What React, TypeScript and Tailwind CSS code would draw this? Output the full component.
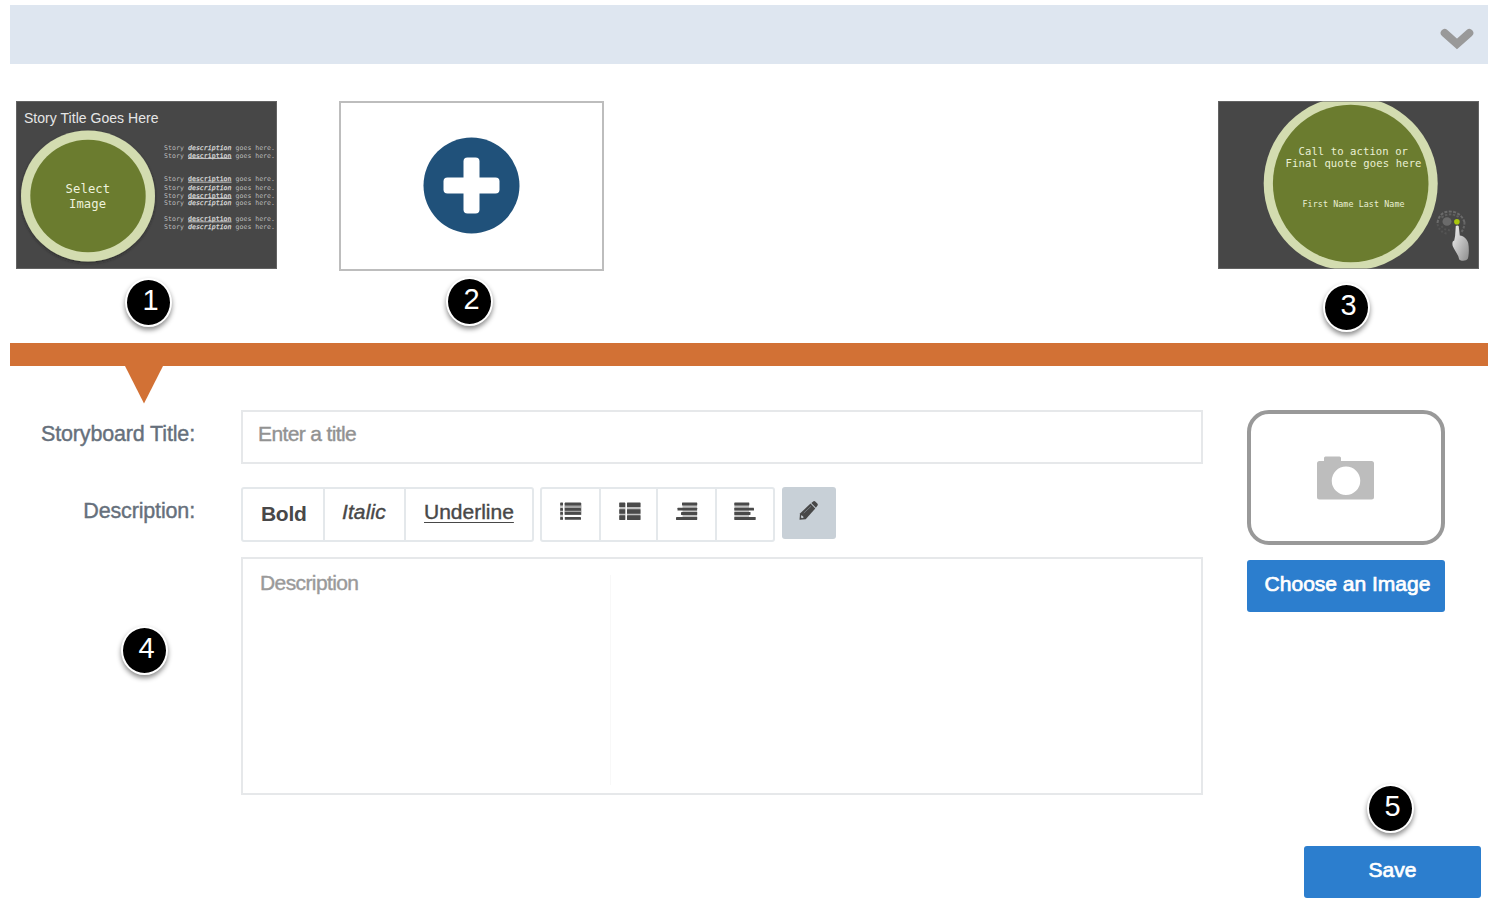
import React from "react";

const FONT = "font-['Liberation_Sans',Arial,sans-serif]";
const MONO = "'DejaVu Sans Mono', monospace";

function Badge({ n, className }: { n: number; className: string }) {
  return (
    <div
      className={`absolute flex h-[49px] w-[47px] items-center justify-center rounded-[50%] border-2 border-white bg-black pb-[4px] pl-[4px] text-[29px] leading-none text-white shadow-[0_3px_5px_rgba(0,0,0,0.45)] ${className}`}
    >
      {n}
    </div>
  );
}

const LINES: [number, boolean][] = [
  [150, true],
  [157.7, false],
  [181.3, false],
  [189.6, true],
  [197.6, false],
  [205, true],
  [221, false],
  [229, true],
];

function StoryThumb() {
  return (
    <svg className="block h-[168px] w-[261px]" viewBox="16 101 261 168">
      <defs>
        <filter id="soft" x="-10%" y="-10%" width="120%" height="125%">
          <feDropShadow dx="0" dy="1.5" stdDeviation="1.5" floodColor="#222" floodOpacity="0.6" />
        </filter>
      </defs>
      <rect x="16" y="101" width="261" height="168" fill="#474747" />
      <text x="24" y="122.8" fontSize="14" fill="#e6e6e6" textLength="134.5">Story Title Goes Here</text>
      <ellipse cx="88" cy="196" rx="67" ry="65.5" fill="#d3dcb0" filter="url(#soft)" />
      <ellipse cx="88" cy="196" rx="57.7" ry="56.3" fill="#6b7c2f" />
      <g fontFamily={MONO} fill="#eef2dc" fontSize="12.2">
        <text x="65.6" y="192.7" textLength="44.5">Select</text>
        <text x="69" y="207.700" textLength="37">Image</text>
      </g>
      {LINES.map(([y, italic]) => (
        <g key={y} fontFamily={MONO} fontSize="6.5" fill="#bcbcbc">
          <text x="164" y={y} textLength="20">Story</text>
          <text x="188" y={y} textLength="43.5" fill="#dcdcdc" fontStyle={italic ? "italic" : "normal"} stroke="#dcdcdc" strokeWidth="0.25">
            description
          </text>
          {!italic && <rect x="188" y={y + 0.4} width="43.5" height="0.9" fill="#cccccc" />}
          <text x="235.6" y={y} textLength="15.8">goes</text>
          <text x="255.3" y={y} textLength="19.5">here.</text>
        </g>
      ))}
      <rect x="16.5" y="101.5" width="260" height="167" fill="none" stroke="#777" strokeOpacity="0.6" />
    </svg>
  );
}

function ClosingThumb() {
  return (
    <svg className="block h-[168px] w-[261px]" viewBox="1217.5 101 261 168">
      <defs>
        <linearGradient id="hand" x1="0" y1="0" x2="1" y2="1">
          <stop offset="0" stopColor="#f4f4f4" />
          <stop offset="1" stopColor="#8d8d8d" />
        </linearGradient>
      </defs>
      <rect x="1217" y="101" width="262" height="168" fill="#474747" />
      <circle cx="1350.2" cy="183.5" r="87" fill="#d3dcb0" />
      <ellipse cx="1350.2" cy="183.5" rx="77.8" ry="78.7" fill="#6b7c2f" />
      <g fontFamily={MONO} fill="#eaf0d4">
        <text x="1298" y="155" fontSize="10.6" textLength="109.5">Call to action or</text>
        <text x="1285" y="167.3" fontSize="10.6" textLength="136">Final quote goes here</text>
        <text x="1302" y="206.5" fontSize="8.3" textLength="102">First Name Last Name</text>
      </g>
      <g fill="none" strokeWidth="2">
        <path d="M1437 223C1438 215 1443 211.500 1449 211.500S1461 214 1464 222" strokeDasharray="3 1.400" stroke="#6b6b6b" />
        <path d="M1441 217.500Q1449 211.500 1458 217" strokeDasharray="2.500 1.500" stroke="#606060" />
        <path d="M1437 224Q1439 233 1448 234M1441 226Q1444 231 1452 230" strokeDasharray="2 2" stroke="#545454" />
        <path d="M1464 222Q1464 228 1461 232" strokeDasharray="2.500 1.500" stroke="#666" />
      </g>
      <ellipse cx="1446.500" cy="221.500" rx="4.500" ry="4.300" fill="#6b6b6b" />
      <path
        d="M1455.300 226Q1456.800 224.800 1458.200 226L1459.300 235.500C1463.500 236 1466.500 239 1467.700 243C1468.700 248 1468.500 255 1467.400 258.500C1466 261 1461 261.500 1458.700 259.500C1457.700 254 1454 250.500 1452.200 246C1451.500 243 1452 241 1453.700 240.500L1454.600 236Z"
        fill="url(#hand)"
      />
      <circle cx="1456.400" cy="221.700" r="2.800" fill="#a9c70c" />
      <rect x="1218" y="101.5" width="260" height="167" fill="none" stroke="#777" strokeOpacity="0.6" />
    </svg>
  );
}

function Bars({ rects }: { rects: number[][] }) {
  return (
    <svg className="h-[19px] w-[22px]" viewBox="0 0 22 19" fill="#4a4a4a">
      {rects.map(([x, y, w, h, shade]) => (
        <rect key={`${x}-${y}`} x={x} y={y} width={w} height={h} rx="0.4" fillOpacity={shade ?? 1} />
      ))}
    </svg>
  );
}

const LIST = [
  [0, 1, 3, 17, 0.3],
  [4.5, 1, 17, 12, 0.5],
  ...[0.6, 6, 10, 15].flatMap((y) => [[0.2, y, 2.8, 2.8], [4.8, y, 16.2, 2.8]]),
];
const TILES = [
  [0.5, 1, 6, 17, 0.35],
  [8, 1, 13.500, 17, 0.35],
  ...[0.5, 7.2, 13.3].flatMap((y) => [[0.2, y, 6, 4.6], [8, y, 13.500, 4.6]]),
];
const RIGHT = [[6.5, 1, 14.6, 16.5, 0.35], [6, 0.6, 15.2, 2.9], [1.5, 5.8, 19.600, 2.800], [5, 10, 16.200, 2.900], [0, 15, 21.2, 2.900]];
const LEFT = [[0.4, 1, 14.6, 16.5, 0.35], [0.3, 0.6, 15, 2.9], [0.3, 5.8, 19.700, 2.800], [0.3, 10, 16.200, 2.900], [0.3, 15, 21.4, 2.900]];

export default function App() {
  return (
    <div className={`relative flex h-[910px] w-[1500px] flex-col overflow-hidden bg-white ${FONT}`}>
      <header className="mt-[5px] mr-[12px] ml-[10px] flex h-[59px] shrink-0 items-center justify-end bg-[#dee6f0] pr-[14px] pt-[9px]">
        <svg className="h-[24px] w-[34px]" viewBox="0 0 34 24">
          <path d="M4.700 6L17 17L29.300 6" fill="none" stroke="#999" strokeWidth="8" strokeLinecap="round" />
        </svg>
      </header>

      <section className="mt-[37px] flex h-[170px] shrink-0 pr-[21px] pl-[16px]">
        <StoryThumb />
        <button className="ml-[62px] flex h-[170px] w-[265px] items-center justify-center border-2 border-[#bdbdbd] bg-white pb-[1px]">
          <svg className="h-[97px] w-[97px]" viewBox="0 0 97 97">
            <circle cx="48.500" cy="48.500" r="48" fill="#20517a" />
            <rect x="40.500" y="20.500" width="16" height="56" rx="4" fill="#fff" />
            <rect x="20.500" y="40.500" width="56" height="16" rx="4" fill="#fff" />
          </svg>
        </button>
        <div className="ml-auto">
          <ClosingThumb />
        </div>
      </section>

      <div className="mt-[72px] mr-[12px] ml-[10px] h-[23px] shrink-0 bg-[#d27135]" />
      <svg className="ml-[125px] h-[38px] w-[39px] shrink-0" viewBox="0 0 39 38">
        <path d="M0 0H38L19 37.500Z" fill="#d27135" />
      </svg>

      <main className="mt-[6px] flex">
        <div className="flex w-[195px] shrink-0 flex-col items-end text-[21.5px] leading-[26px] tracking-[-0.15px] text-[#66707c] [-webkit-text-stroke:0.4px_#66707c]">
          <label className="mt-[11px]">Storyboard Title:</label>
          <label className="mt-[51px]">Description:</label>
        </div>
        <div className="ml-[46px] w-[962px] shrink-0">
          <div className="h-[54px] border-2 border-[#e6e8ea] pt-[9px] pl-[15px] text-[21px] leading-[26px] tracking-[-0.62px] text-[#929292] [-webkit-text-stroke:0.4px_#929292]">
            Enter a title
          </div>
          <div className="mt-[23px] flex h-[55px] text-[21px] leading-[26px] text-[#484848]">
            <div className="flex h-[55px] w-[293px] rounded-[3px] border-2 border-[#e4e8eb]">
              <span className="w-[82px] border-r-2 border-[#e4e8eb] pt-[12px] pl-[18px] font-bold tracking-[-0.3px]">Bold</span>
              <span className="w-[81px] border-r-2 border-[#e4e8eb] pt-[10px] pl-[17px] italic tracking-[0.1px] [-webkit-text-stroke:0.4px_#484848]">Italic</span>
              <span className="pt-[10px] pl-[18px] underline decoration-1 underline-offset-[3px] [-webkit-text-stroke:0.4px_#484848]">Underline</span>
            </div>
            <div className="ml-[6px] flex h-[55px] w-[235px] rounded-[3px] border-2 border-[#e4e8eb]">
              <span className="w-[59px] border-r-2 border-[#e4e8eb] pt-[13px] pl-[18px]"><Bars rects={LIST} /></span>
              <span className="w-[57px] border-r-2 border-[#e4e8eb] pt-[13px] pl-[18px]"><Bars rects={TILES} /></span>
              <span className="w-[59px] border-r-2 border-[#e4e8eb] pt-[13px] pl-[18px]"><Bars rects={RIGHT} /></span>
              <span className="pt-[13px] pl-[17px]"><Bars rects={LEFT} /></span>
            </div>
            <div className="ml-[7px] h-[52px] w-[54px] rounded-[3px] bg-[#c8d0d7] pt-[14px] pl-[17px]">
              <svg className="h-[20px] w-[20px]" viewBox="0 0 20 20">
                <path d="M0.500 18.700L1 12.500L11.500 2.600L16.300 7.500L6.700 18.200Z" fill="#484848" />
                <path d="M12.300 1.900L14.500 0.300Q15.500 -0.200 16.500 0.700L18.300 2.600Q19.200 3.500 18.500 4.500L16.900 6.700Z" fill="#484848" />
                <path d="M2.500 14L4.800 16.300L3 17.200L1.900 16.200Z" fill="#c8d0d7" />
                <path d="M4.800 12L12 5.300" stroke="#80868b" strokeWidth="0.800" />
              </svg>
            </div>
          </div>
          <div className="mt-[15px] h-[238px] border-2 border-[#e6e8ea] pt-[11px] pl-[17px] text-[21px] leading-[26px] tracking-[-0.6px] text-[#9a9a9a] [-webkit-text-stroke:0.4px_#9a9a9a]">
            Description
          </div>
        </div>
        <div className="ml-[44px] w-[198px] shrink-0">
          <div className="flex h-[135px] items-center justify-center rounded-[22px] border-[4.500px] border-[#999] pr-[2px]">
            <svg className="h-[44px] w-[57px]" viewBox="0 0 57 44">
              <path
                fillRule="evenodd"
                d="M2.500 5H7V2Q7 0.500 8.500 0.500H22.500Q24 0.500 24 2V5H54.500Q57 5 57 7.500V41Q57 43.500 54.500 43.500H2.500Q0 43.500 0 41V7.500Q0 5 2.500 5ZM29 10.500A14.200 14.200 0 1 0 29 39A14.200 14.200 0 1 0 29 10.500Z"
                fill="#bdbdbd"
              />
            </svg>
          </div>
          <button className="mt-[15px] flex h-[52px] w-[198px] justify-center rounded-[3px] bg-[#2c7ece] pt-[11px] pl-[3px] text-[21px] leading-[26px] text-white [-webkit-text-stroke:0.7px_white]">
            Choose an Image
          </button>
        </div>
      </main>
      <div className="mt-[51px] flex shrink-0 justify-end pr-[19px]">
        <button className="flex h-[52px] w-[177px] justify-center rounded-[3px] bg-[#2c7ece] pt-[11px] text-[21px] leading-[26px] text-white [-webkit-text-stroke:0.7px_white]">
          Save
        </button>
      </div>

      <div className="absolute top-[575px] left-[610px] h-[210px] w-px bg-[#f8f8f8]" />
      <Badge n={1} className="top-[278px] left-[125px]" />
      <Badge n={2} className="top-[277px] left-[446px]" />
      <Badge n={3} className="top-[283px] left-[1323px]" />
      <Badge n={4} className="top-[626px] left-[121px]" />
      <Badge n={5} className="top-[784px] left-[1367px]" />
    </div>
  );
}
